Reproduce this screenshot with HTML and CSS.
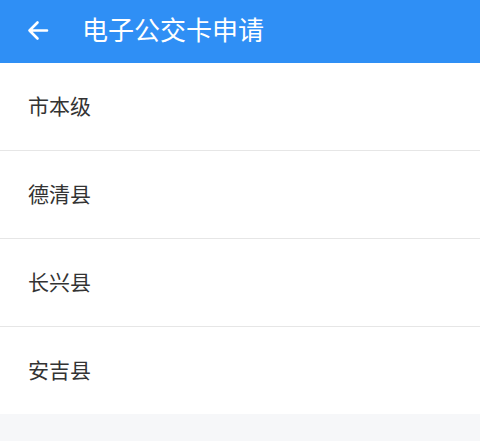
FILE: index.html
```html
<!DOCTYPE html>
<html lang="zh-CN">
<head>
<meta charset="utf-8">
<title>电子公交卡申请</title>
<link rel="stylesheet" href="styles.css">
</head>
<body>
<header class="topbar">
  <span class="back">
    <svg width="22" height="22" viewBox="0 0 22 22"><path d="M20 10.5H2.5M10.5 2.5 2.5 10.5l8 8" fill="none" stroke="#fff" stroke-width="2.6" stroke-linecap="round" stroke-linejoin="round"/></svg>
  </span>
  <h1 class="title">电子公交卡申请</h1>
</header>
<ul class="list">
  <li class="item">市本级</li>
  <li class="item">德清县</li>
  <li class="item">长兴县</li>
  <li class="item">安吉县</li>
</ul>
</body>
</html>
```
FILE: styles.css
```css
html, body {
  margin: 0;
  padding: 0;
}
body {
  background: #f6f7f9;
  font-family: "Noto Sans CJK SC", "Noto Sans", sans-serif;
  width: 480px;
  height: 441px;
  overflow: hidden;
}
.topbar {
  height: 63px;
  background: #2f8ff5;
  display: flex;
  align-items: center;
  padding-left: 27px;
  box-sizing: border-box;
}
.back {
  width: 22px;
  height: 22px;
  display: flex;
  margin-bottom: 2px;
}
.title {
  margin: 0 0 7px 33px;
  color: #fff;
  font-size: 26px;
  font-weight: 400;
  letter-spacing: 0;
}
.list {
  list-style: none;
  margin: 0;
  padding: 0;
  background: #fff;
}
.item {
  height: 87px;
  box-sizing: border-box;
  padding: 0 0 3px 28px;
  display: flex;
  align-items: center;
  font-size: 21px;
  color: #333;
}
.item + .item {
  height: 88px;
  border-top: 1px solid #e6e6e6;
}
```
